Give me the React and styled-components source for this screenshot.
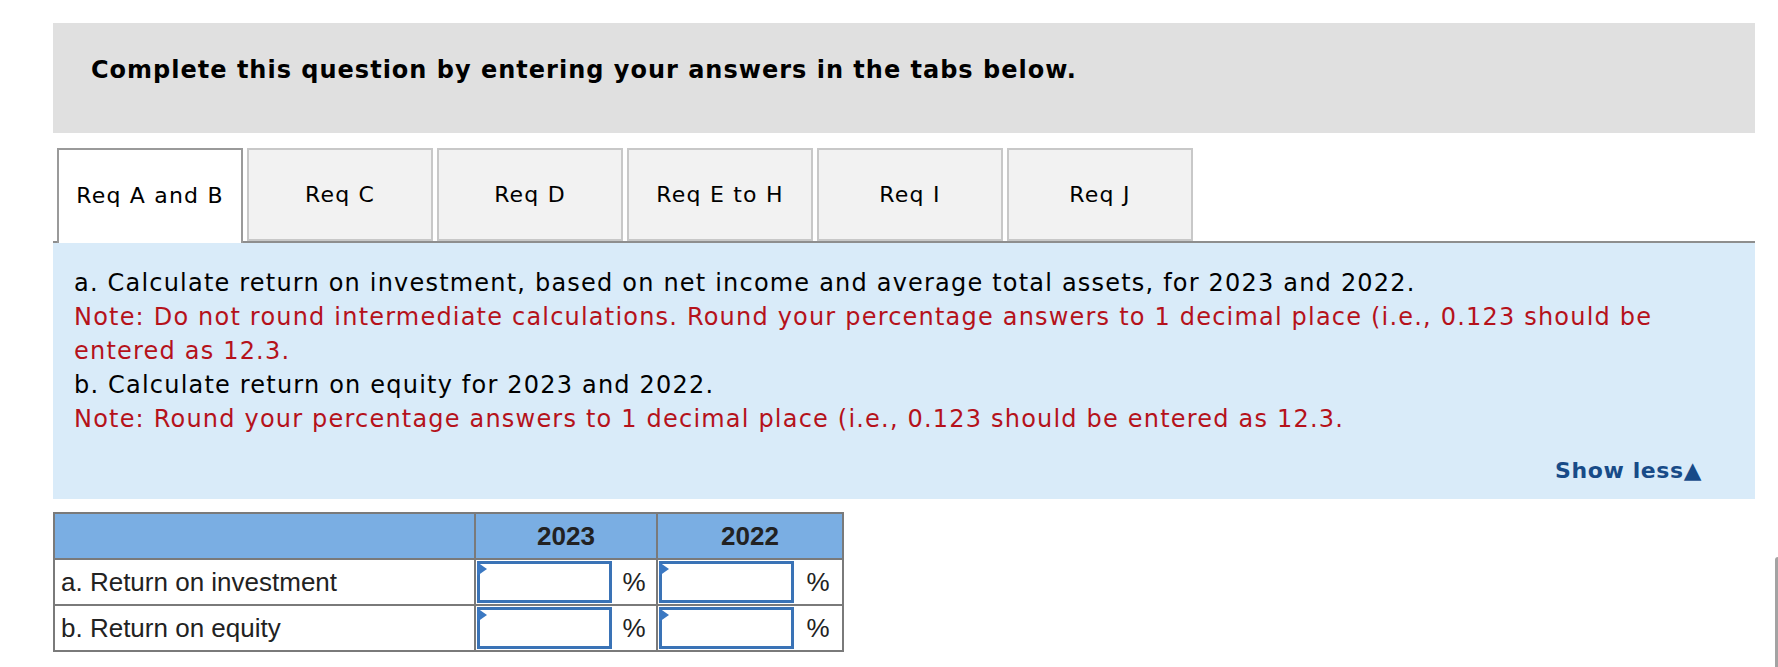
import styled, { createGlobalStyle } from "styled-components";

const GlobalStyle = createGlobalStyle`
  html, body {
    margin: 0;
    padding: 0;
    background: #ffffff;
  }
  body {
    font-family: "DejaVu Sans", Verdana, sans-serif;
    color: #000;
  }
`;

const TABS = ["Req A and B", "Req C", "Req D", "Req E to H", "Req I", "Req J"];

const ROWS = [
  { label: "a. Return on investment", unit: "%" },
  { label: "b. Return on equity", unit: "%" },
];

const App = () => {
  return (
    <>
      <GlobalStyle />
      <Page>
        <Instructions>
          Complete this question by entering your answers in the tabs below.
        </Instructions>

        <TabStrip>
          {TABS.map((name, i) => (
            <Tab key={name} $active={i === 0}>
              {name}
            </Tab>
          ))}
        </TabStrip>

        <QuestionPanel>
          <Line>
            a. Calculate return on investment, based on net income and average
            total assets, for 2023 and 2022.
          </Line>
          <Note>
            Note: Do not round intermediate calculations. Round your percentage
            answers to 1 decimal place (i.e., 0.123 should be entered as 12.3.
          </Note>
          <Line>b. Calculate return on equity for 2023 and 2022.</Line>
          <Note>
            Note: Round your percentage answers to 1 decimal place (i.e., 0.123
            should be entered as 12.3.
          </Note>
          <ShowLess>
            Show less<Arrow>▲</Arrow>
          </ShowLess>
        </QuestionPanel>

        <AnswerTable>
          <colgroup>
            <col style={{ width: 421 }} />
            <col style={{ width: 137 }} />
            <col style={{ width: 45 }} />
            <col style={{ width: 137 }} />
            <col style={{ width: 49 }} />
          </colgroup>
          <thead>
            <tr>
              <HeadCell />
              <HeadCell colSpan={2}>2023</HeadCell>
              <HeadCell colSpan={2}>2022</HeadCell>
            </tr>
          </thead>
          <tbody>
            {ROWS.map((row) => (
              <tr key={row.label}>
                <LabelCell>{row.label}</LabelCell>
                <InputCell>
                  <InputWrap>
                    <Marker />
                    <AnswerInput type="text" />
                  </InputWrap>
                </InputCell>
                <UnitCell>{row.unit}</UnitCell>
                <InputCell>
                  <InputWrap>
                    <Marker />
                    <AnswerInput type="text" />
                  </InputWrap>
                </InputCell>
                <UnitCell>{row.unit}</UnitCell>
              </tr>
            ))}
          </tbody>
        </AnswerTable>
      </Page>
      <ScrollThumb />
    </>
  );
};

export default App;

const Page = styled.div`
  width: 1702px;
  margin: 23px 0 0 53px;
`;

const Instructions = styled.div`
  height: 110px;
  background: #e0e0e0;
  display: flex;
  align-items: center;
  padding-left: 38px;
  padding-bottom: 16px;
  box-sizing: border-box;
  font-size: 24px;
  letter-spacing: 1px;
  font-weight: bold;
  color: #000;
`;

const TabStrip = styled.div`
  display: flex;
  align-items: flex-end;
  gap: 4px;
  margin-top: 15px;
  padding-left: 4px;
  border-bottom: 2px solid #8e8e8e;
`;

const Tab = styled.div`
  width: 186px;
  height: ${(props) => (props.$active ? "95px" : "93px")};
  margin-bottom: ${(props) => (props.$active ? "-2px" : "0")};
  box-sizing: border-box;
  display: flex;
  align-items: center;
  justify-content: center;
  padding-bottom: ${(props) => (props.$active ? "2px" : "0")};
  background: ${(props) => (props.$active ? "#ffffff" : "#f2f2f2")};
  border: 2px solid ${(props) => (props.$active ? "#9a9a9a" : "#c8c8c8")};
  border-bottom: ${(props) => (props.$active ? "none" : "2px solid #c8c8c8")};
  font-size: 22px;
  letter-spacing: 1.2px;
  color: #000;
  white-space: nowrap;
`;

const QuestionPanel = styled.div`
  background: #d9ebf9;
  padding: 23px 53px 13px 21px;
  display: flex;
  flex-direction: column;
  font-size: 24px;
  letter-spacing: 1.2px;
  line-height: 34px;
`;

const Line = styled.div`
  color: #000;
`;

const Note = styled.div`
  color: #b5121b;
`;

const ShowLess = styled.div`
  align-self: flex-end;
  margin-top: 19px;
  line-height: 30px;
  font-size: 22px;
  letter-spacing: 0.6px;
  font-weight: bold;
  color: #184b88;
`;

const Arrow = styled.span`
  font-size: 23px;
`;

const AnswerTable = styled.table`
  margin-top: 13px;
  width: 789px;
  table-layout: fixed;
  border-collapse: collapse;
  font-family: "Liberation Sans", Arial, sans-serif;
  font-size: 26px;
  color: #222;
`;

const HeadCell = styled.th`
  height: 44px;
  padding: 0;
  background: #7aaee3;
  border: 2px solid #7a7a7a;
  font-weight: bold;
  text-align: center;
  color: #222;
`;

const LabelCell = styled.td`
  height: 44px;
  padding: 0 0 0 6px;
  border: 2px solid #7a7a7a;
  white-space: nowrap;
`;

const InputCell = styled.td`
  height: 44px;
  padding: 0 0 0 1px;
  border-top: 2px solid #7a7a7a;
  border-bottom: 2px solid #7a7a7a;
  border-left: 2px solid #7a7a7a;
`;

const UnitCell = styled.td`
  padding: 0;
  text-align: center;
  border-top: 2px solid #7a7a7a;
  border-bottom: 2px solid #7a7a7a;
  border-right: 2px solid #7a7a7a;
`;

const InputWrap = styled.div`
  position: relative;
  display: flex;
`;

const AnswerInput = styled.input`
  width: 100%;
  height: 42px;
  box-sizing: border-box;
  border: 3px solid #3a73b6;
  border-radius: 0;
  background: #fff;
  outline: none;
  font-size: 20px;
`;

const Marker = styled.span`
  position: absolute;
  left: 0;
  top: 1px;
  width: 0;
  height: 0;
  border-top: 7px solid transparent;
  border-bottom: 7px solid transparent;
  border-left: 10px solid #3b78c2;
`;

const ScrollThumb = styled.div`
  position: fixed;
  right: 0;
  top: 557px;
  width: 3px;
  height: 110px;
  background: #a3a3a3;
  border-radius: 3px 0 0 0;
`;
